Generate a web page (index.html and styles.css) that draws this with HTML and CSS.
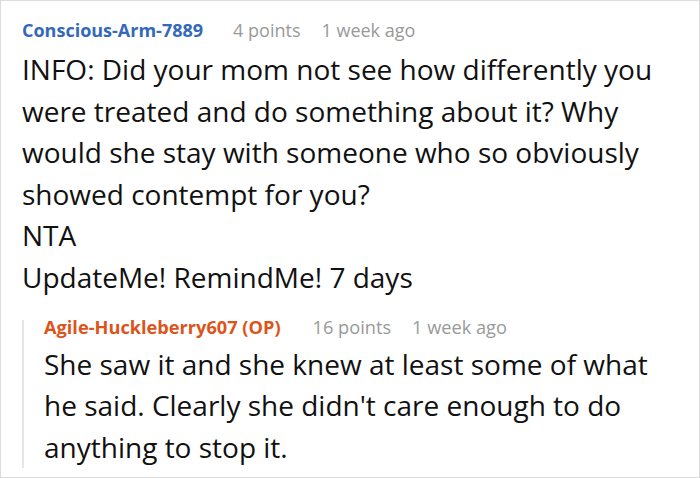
FILE: index.html
```html
<!DOCTYPE html>
<html>
<head>
<meta charset="utf-8">
<link rel="stylesheet" href="styles.css">
</head>
<body>
<div class="frame">
  <div class="comment">
    <div class="meta">
      <span class="author">Conscious-Arm-7889</span>
      <span class="info">4 points</span>
      <span class="info">1 week ago</span>
    </div>
    <div class="body">
      INFO: Did your mom not see how differently you were treated and do something about it? Why would she stay with someone who so obviously showed contempt for you?<br>NTA<br>UpdateMe! RemindMe! 7 days
    </div>
    <div class="reply">
      <div class="meta reply-meta">
        <span class="author op">Agile-Huckleberry607 (OP)</span>
        <span class="info">16 points</span>
        <span class="info">1 week ago</span>
      </div>
      <div class="body reply-body">
        She saw it and she knew at least some of what he said. Clearly she didn't care enough to do anything to stop it.
      </div>
    </div>
  </div>
</div>
</body>
</html>
```
FILE: styles.css
```css
html, body {
  margin: 0;
  padding: 0;
  background: #fff;
}
.frame {
  width: 700px;
  height: 478px;
  box-sizing: border-box;
  border: 1px solid #dcdcdc;
  font-family: "Open Sans", "Noto Sans", sans-serif;
  overflow: hidden;
}
.comment {
  padding: 18px 12px 0 21px;
}
.meta {
  display: flex;
  gap: 21px;
  align-items: baseline;
  font-size: 18px;
  line-height: 22px;
  height: 22px;
  white-space: nowrap;
}
.author {
  font-weight: 700;
  color: #3469b8;
  margin-right: 9px;
}
.author.op {
  color: #dc541b;
  margin-right: 11px;
}
.info {
  color: #999;
}
.body {
  margin-top: 8px;
  font-size: 28px;
  line-height: 41.6px;
  color: #111;
}
.reply {
  margin-top: 21px;
  border-left: 2px solid #e6e6e6;
  padding-left: 20px;
}
.reply-meta {
  font-size: 18.2px;
  line-height: 14px;
  height: 14px;
}
.reply-body {
  margin-top: 10px;
}
```
